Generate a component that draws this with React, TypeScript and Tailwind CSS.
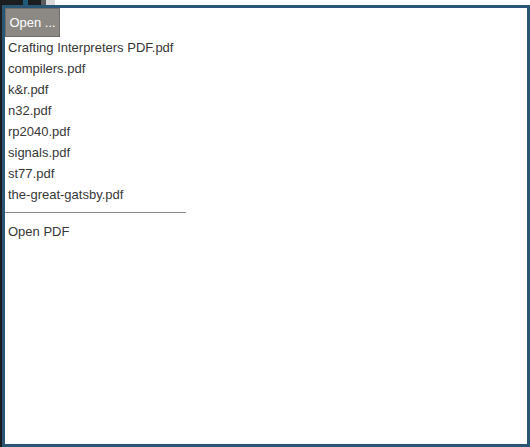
const files = [
  "Crafting Interpreters PDF.pdf",
  "compilers.pdf",
  "k&r.pdf",
  "n32.pdf",
  "rp2040.pdf",
  "signals.pdf",
  "st77.pdf",
  "the-great-gatsby.pdf",
];

export default function App() {
  return (
    <div className="flex h-[447px] w-[530px] flex-col overflow-hidden bg-white font-['Liberation_Sans',Arial,sans-serif]">
      {/* desktop strip behind the window */}
      <div className="flex h-[5px] shrink-0">
        <div className="w-[23px] bg-[#1c1d1f]" />
        <div className="w-[5px] bg-[#1f5a7a]" />
        <div className="w-[13px] bg-[#1c1d1f]" />
        <div className="w-[5px] bg-[#5a5d60]" />
        <div className="w-[9px] bg-[#d8d8d8]" />
        <div className="flex-1 bg-white" />
      </div>
      <div className="flex flex-1">
        <div className="w-[2px] bg-[#1c1d1f]" />
        <div className="flex flex-1 flex-col border-[3px] border-[#2a5675] bg-white">
          <div>
            <button className="h-[29px] w-[55px] border border-[#706e6a] bg-[#8c8984] text-center text-[13px] leading-none text-white">
              Open ...
            </button>
          </div>
          <ul className="w-[181px] text-[13px] text-[#383838]">
            {files.map((f) => (
              <li key={f} className="flex h-[21px] items-center pl-[3px]">
                {f}
              </li>
            ))}
          </ul>
          <hr className="mt-[7px] mb-[8px] w-[181px] border-t border-[#8a8a8a]" />
          <div className="flex h-[21px] items-center pl-[3px] text-[13px] text-[#383838]">
            Open PDF
          </div>
        </div>
      </div>
    </div>
  );
}
